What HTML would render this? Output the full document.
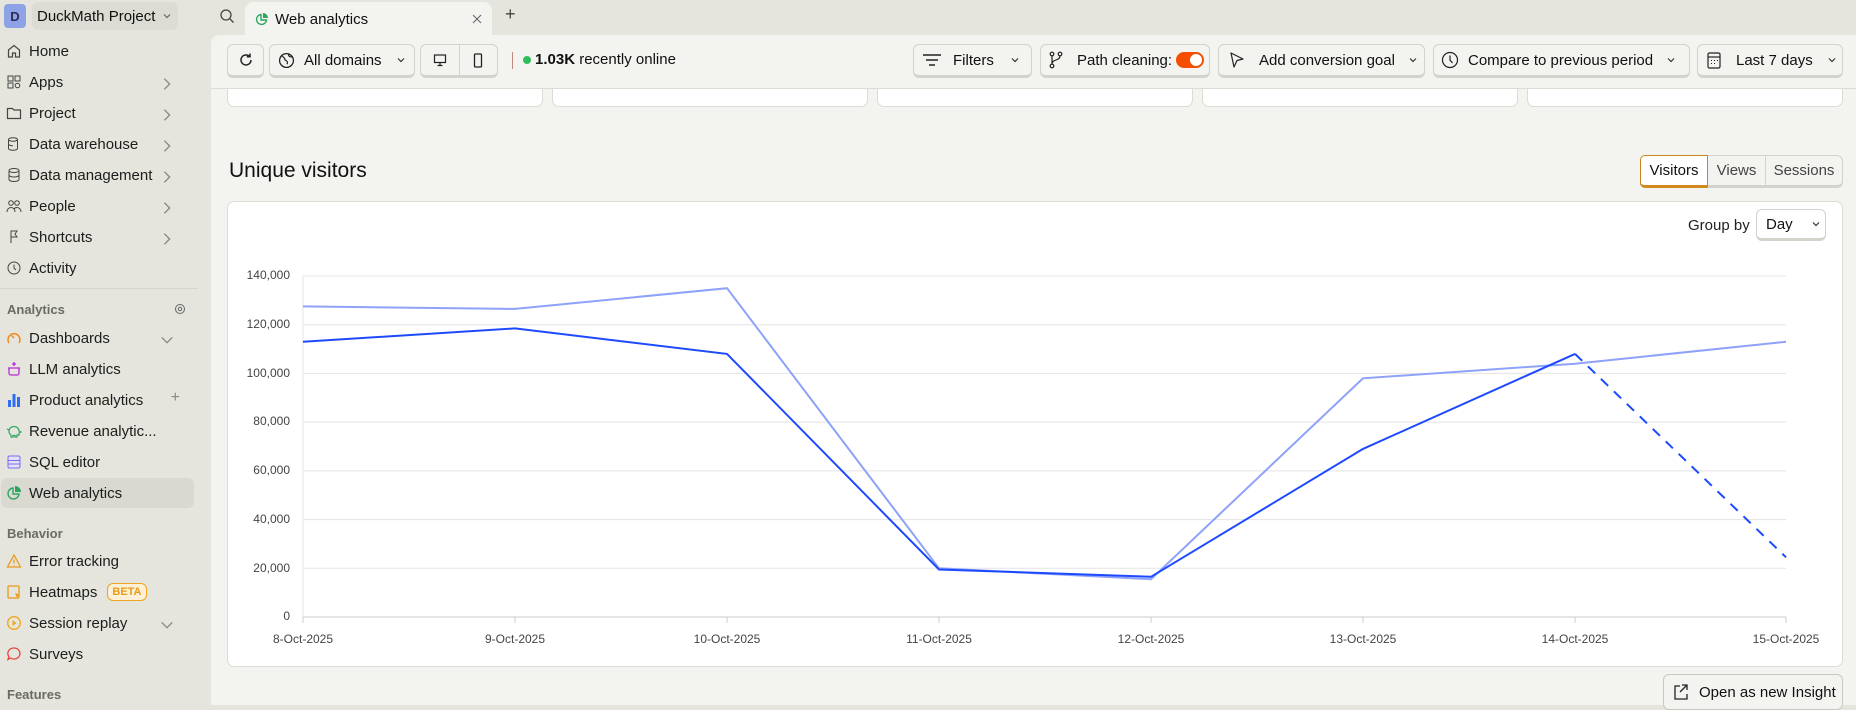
<!DOCTYPE html>
<html><head><meta charset="utf-8"><style>
*{box-sizing:border-box;margin:0;padding:0}
body{width:1856px;height:705px;overflow:hidden;background:#e5e5de;font-family:"Liberation Sans",sans-serif;color:#111;position:relative;font-size:15px}
.a{position:absolute}
.side .it{position:absolute;left:6px;height:30px;width:186px;display:flex;align-items:center;font-size:15px;color:#1d1d1d}
.side .it svg{width:16px;height:16px;margin-right:7px;flex:none}
.side .chev{position:absolute;right:10px;top:9px;width:12px;height:12px}
.hdr{position:absolute;left:7px;font-size:13px;font-weight:bold;color:#6b6b66}
.main{position:absolute;left:211px;top:35px;width:1645px;height:670px;background:#f3f3ef;border-top-left-radius:8px}
.btn{position:absolute;top:44px;height:34px;background:#f3f3ef;border:1px solid #d3d3cc;border-bottom:3px solid #d3d3cc;border-radius:6px;display:flex;align-items:center;font-size:15px;color:#111}
.btn svg{flex:none}
.card{position:absolute;top:80px;height:27px;background:#fff;border:1px solid #dcdcd5;border-top:none;border-radius:0 0 7px 7px}
.card span{position:absolute;left:140px;top:-3px;font-size:12px}
.yl{position:absolute;right:1566px;font-size:12px;color:#444;text-align:right}
.xl{position:absolute;top:632px;font-size:12px;color:#444;width:100px;text-align:center}
</style></head><body>
<!-- top bar -->
<div class="a" style="left:4px;top:4px;width:22px;height:24px;background:#8ea2e6;border-radius:4px;color:#2b2b5a;font-weight:bold;font-size:13px;display:flex;align-items:center;justify-content:center">D</div>
<div class="a" style="left:32px;top:2px;width:146px;height:28px;background:#dcdcd4;border-radius:6px;display:flex;align-items:center;padding-left:5px;font-size:15px">DuckMath Project<svg style="margin-left:7px" width="10" height="10" viewBox="0 0 10 10"><path d="M2 3.5l3 3 3-3" stroke="#666" fill="none" stroke-width="1.2"/></svg></div>
<svg class="a" style="left:219px;top:8px" width="16" height="16" viewBox="0 0 16 16"><circle cx="7" cy="7" r="5" stroke="#444" fill="none" stroke-width="1.3"/><path d="M11 11l3.5 3.5" stroke="#444" stroke-width="1.3"/></svg>
<div class="a" style="left:245px;top:2px;width:247px;height:34px;background:#f3f3ef;border-radius:8px 8px 0 0;display:flex;align-items:center;padding-left:10px;font-size:15px">
<svg width="14" height="14" viewBox="0 0 14 14" style="margin-right:6px"><path d="M6 2.5A5 5 0 1 0 11.5 8H6z" stroke="#2ea55e" fill="none" stroke-width="1.4"/><path d="M8 1v5h5A5 5 0 0 0 8 1z" fill="#2ea55e"/></svg>Web analytics
<svg class="a" style="left:227px;top:12px" width="10" height="10" viewBox="0 0 10 10"><path d="M1 1l8 8M9 1l-8 8" stroke="#666" stroke-width="1.1"/></svg></div>
<div class="a" style="left:505px;top:4px;font-size:18px;color:#444">+</div>

<!-- sidebar -->
<div class="side">
<div class="it" style="top:36px"><svg viewBox="0 0 16 16"><path d="M2.5 7L8 2.5 13.5 7v7h-4v-4h-3v4h-4z" stroke="#444" fill="none" stroke-width="1.2"/></svg>Home</div>
<div class="it" style="top:67px"><svg viewBox="0 0 16 16"><rect x="2" y="2" width="5" height="5" stroke="#444" fill="none"/><rect x="9" y="2" width="5" height="5" stroke="#444" fill="none"/><rect x="2" y="9" width="5" height="5" stroke="#444" fill="none"/><circle cx="11.5" cy="11.5" r="2.3" stroke="#444" fill="none"/></svg>Apps<svg class="chev" viewBox="0 0 12 12"><path d="M4 2l4 4-4 4" stroke="#888" fill="none"/></svg></div>
<div class="it" style="top:98px"><svg viewBox="0 0 16 16"><path d="M1.5 3.5h5l1.5 1.5h6.5v8.5h-13z" stroke="#444" fill="none" stroke-width="1.2"/></svg>Project<svg class="chev" viewBox="0 0 12 12"><path d="M4 2l4 4-4 4" stroke="#888" fill="none"/></svg></div>
<div class="it" style="top:129px"><svg viewBox="0 0 16 16"><ellipse cx="7" cy="3.5" rx="4.5" ry="1.8" stroke="#444" fill="none"/><path d="M2.5 3.5v9c0 1 2 1.8 4.5 1.8s4.5-.8 4.5-1.8v-9M2.5 8c0 1 2 1.8 4.5 1.8" stroke="#444" fill="none"/></svg>Data warehouse<svg class="chev" viewBox="0 0 12 12"><path d="M4 2l4 4-4 4" stroke="#888" fill="none"/></svg></div>
<div class="it" style="top:160px"><svg viewBox="0 0 16 16"><ellipse cx="8" cy="3.5" rx="5" ry="2" stroke="#444" fill="none"/><path d="M3 3.5v9c0 1 2.2 2 5 2s5-1 5-2v-9M3 8c0 1 2.2 2 5 2s5-1 5-2" stroke="#444" fill="none"/></svg>Data management<svg class="chev" viewBox="0 0 12 12"><path d="M4 2l4 4-4 4" stroke="#888" fill="none"/></svg></div>
<div class="it" style="top:191px"><svg viewBox="0 0 16 16"><circle cx="5" cy="5" r="2.3" stroke="#444" fill="none"/><circle cx="11" cy="5" r="2.3" stroke="#444" fill="none"/><path d="M1 14c0-3 2-4.5 4-4.5s4 1.5 4 4.5M8 11c.6-1 1.8-1.5 3-1.5 2 0 4 1.5 4 4.5" stroke="#444" fill="none"/></svg>People<svg class="chev" viewBox="0 0 12 12"><path d="M4 2l4 4-4 4" stroke="#888" fill="none"/></svg></div>
<div class="it" style="top:222px"><svg viewBox="0 0 16 16"><path d="M5 14V2h6l-2 3 2 3H5" stroke="#444" fill="none"/></svg>Shortcuts<svg class="chev" viewBox="0 0 12 12"><path d="M4 2l4 4-4 4" stroke="#888" fill="none"/></svg></div>
<div class="it" style="top:253px"><svg viewBox="0 0 16 16"><circle cx="8" cy="8" r="6" stroke="#444" fill="none"/><path d="M8 4.5V8l2 2" stroke="#444" fill="none"/></svg>Activity</div>
<div class="a" style="left:0;top:288px;width:198px;border-top:1px solid #d5d5cc"></div>
<div class="hdr" style="top:302px">Analytics</div>
<svg class="a" style="left:174px;top:303px" width="12" height="12" viewBox="0 0 12 12"><circle cx="6" cy="6" r="4.5" stroke="#666" fill="none"/><circle cx="6" cy="6" r="1.7" stroke="#666" fill="none"/></svg>
<div class="it" style="top:323px"><svg viewBox="0 0 16 16"><path d="M3 13A6 6 0 1 1 13 13" stroke="#f28a1e" fill="none" stroke-width="1.5"/><path d="M8 8L5.5 5.5" stroke="#f28a1e" stroke-width="1.5"/></svg>Dashboards<svg class="chev" viewBox="0 0 12 12"><path d="M2 4l4 4 4-4" stroke="#888" fill="none"/></svg></div>
<div class="it" style="top:354px"><svg viewBox="0 0 16 16"><path d="M3 7h10v5a2 2 0 0 1-2 2H5a2 2 0 0 1-2-2zM2 7h12" stroke="#b62ad9" fill="none" stroke-width="1.3"/><path d="M8 1v4M6 3h4" stroke="#b62ad9" stroke-width="1.3"/></svg>LLM analytics</div>
<div class="it" style="top:385px"><svg viewBox="0 0 16 16"><rect x="2" y="8" width="3" height="7" fill="#2f6df6"/><rect x="6.5" y="2" width="3" height="13" fill="#2f6df6"/><rect x="11" y="5" width="3" height="10" fill="#2f6df6"/></svg>Product analytics<span class="a" style="right:12px;top:4px;color:#888;font-size:16px">+</span></div>
<div class="it" style="top:416px"><svg viewBox="0 0 16 16"><path d="M3 8a5 4.5 0 0 1 10 0l2 1-2 1v2h-2v2H9v-1.5H7V14H5v-2c-1.5-1-2-2.5-2-4zM1 6l2 1" stroke="#2ea55e" fill="none" stroke-width="1.2"/></svg>Revenue analytic...</div>
<div class="it" style="top:447px"><svg viewBox="0 0 16 16"><rect x="2" y="2" width="12" height="12" rx="1.5" stroke="#7c6cf0" fill="#e3e0fb"/><path d="M2 6.5h12M2 10h12" stroke="#7c6cf0"/></svg>SQL editor</div>
<div class="a" style="left:1px;top:478px;width:193px;height:30px;background:#d9d9d1;border-radius:6px"></div>
<div class="it" style="top:478px"><svg viewBox="0 0 16 16"><path d="M7 3A5.5 5.5 0 1 0 13 9H7z" stroke="#2ea55e" fill="none" stroke-width="1.4"/><path d="M9 1v6h6A6 6 0 0 0 9 1z" fill="#2ea55e"/></svg>Web analytics</div>
<div class="hdr" style="top:526px">Behavior</div>
<div class="it" style="top:546px"><svg viewBox="0 0 16 16"><path d="M8 2l6.5 12h-13z M8 6.5v4M8 12v.8" stroke="#e99b18" fill="none" stroke-width="1.3"/></svg>Error tracking</div>
<div class="it" style="top:577px"><svg viewBox="0 0 16 16"><rect x="2" y="2" width="11" height="12" rx="1" stroke="#e99b18" fill="none" stroke-width="1.3"/><path d="M9 9l5 2-2 1-1 2z" fill="#e99b18"/></svg>Heatmaps<span style="margin-left:10px;border:1.5px solid #f0a31f;color:#e99b18;border-radius:6px;font-size:11px;padding:2px 4px;font-weight:bold;background:#fdf0d8">BETA</span></div>
<div class="it" style="top:608px"><svg viewBox="0 0 16 16"><circle cx="8" cy="8" r="6.3" stroke="#f2a71c" fill="none" stroke-width="1.4"/><path d="M6.5 5l4 3-4 3z" fill="#f2a71c"/></svg>Session replay<svg class="chev" viewBox="0 0 12 12"><path d="M2 4l4 4 4-4" stroke="#888" fill="none"/></svg></div>
<div class="it" style="top:639px"><svg viewBox="0 0 16 16"><path d="M8 2a6 5.5 0 1 1-3.5 10L2 13.5l.8-3A6 5.5 0 0 1 8 2z" stroke="#e6443d" fill="none" stroke-width="1.3"/></svg>Surveys</div>
<div class="hdr" style="top:687px">Features</div>
</div>

<!-- main -->
<div class="main"></div>
<div class="card" style="left:227px;width:316px"><span style="color:#e6443d">- 16%</span></div>
<div class="card" style="left:552px;width:316px"><span style="color:#e6443d">- 22%</span></div>
<div class="card" style="left:877px;width:316px"><span style="color:#e6443d">- 25%</span></div>
<div class="card" style="left:1202px;width:316px"><span style="color:#666">0%</span></div>
<div class="card" style="left:1527px;width:316px"><span style="color:#58a52a">+ 1%</span></div>
<!-- toolbar bg -->
<div class="a" style="left:211px;top:35px;width:1645px;height:54px;background:#f3f3ef;border-bottom:1px solid #dcdcd5;border-top-left-radius:8px"></div>
<div class="btn" style="left:227px;width:37px;justify-content:center"><svg width="16" height="16" viewBox="0 0 16 16"><path d="M13 8a5 5 0 1 1-1.5-3.6M12 1.5v3.2H8.8" stroke="#222" fill="none" stroke-width="1.5"/></svg></div>
<div class="btn" style="left:269px;width:146px;padding-left:8px"><svg width="17" height="17" viewBox="0 0 16 16"><circle cx="8" cy="8" r="6.5" stroke="#222" fill="none" stroke-width="1.2"/><path d="M4 3.5c1 2 3 2 2.5 4 2 .5 3 2 2 4M10 2.2c-.5 1.5 1 2.5 3 2.5" stroke="#222" fill="none" stroke-width="1.1"/></svg><span style="margin-left:9px">All domains</span><svg style="margin-left:14px" width="10" height="10" viewBox="0 0 10 10"><path d="M2 3.5l3 3 3-3" stroke="#333" fill="none" stroke-width="1.2"/></svg></div>
<div class="btn" style="left:420px;width:78px"><div style="width:39px;height:100%;display:flex;align-items:center;justify-content:center;border-right:1px solid #d3d3cc"><svg width="14" height="14" viewBox="0 0 14 14"><rect x="1.5" y="2" width="11" height="7.5" stroke="#222" fill="none" stroke-width="1.2"/><path d="M7 9.5v3M4.5 12.5h5" stroke="#222" stroke-width="1.2"/></svg></div><div style="width:38px;display:flex;justify-content:center"><svg width="12" height="15" viewBox="0 0 12 15"><rect x="2.5" y="1" width="7" height="13" rx="1" stroke="#222" fill="none" stroke-width="1.3"/></svg></div></div>
<div class="a" style="left:512px;top:52px;height:17px;border-left:1.5px solid #c08a80"></div>
<div class="a" style="left:523px;top:56px;width:8px;height:8px;border-radius:50%;background:#2ebd5e"></div>
<div class="a" style="left:535px;top:51px;font-size:15px"><b>1.03K</b> recently online</div>

<div class="btn" style="left:913px;width:119px;padding-left:8px"><svg width="20" height="16" viewBox="0 0 20 16"><path d="M1 3h18M4 8h12M7 13h6" stroke="#222" stroke-width="1.6"/></svg><span style="margin-left:11px">Filters</span><svg style="margin-left:16px" width="10" height="10" viewBox="0 0 10 10"><path d="M2 3.5l3 3 3-3" stroke="#333" fill="none" stroke-width="1.2"/></svg></div>
<div class="btn" style="left:1040px;width:170px;padding-left:8px"><svg width="14" height="18" viewBox="0 0 14 18"><circle cx="3" cy="3" r="1.8" stroke="#222" fill="none" stroke-width="1.2"/><circle cx="11" cy="3" r="1.8" stroke="#222" fill="none" stroke-width="1.2"/><circle cx="3" cy="15" r="1.8" stroke="#222" fill="none" stroke-width="1.2"/><path d="M3 5v8M11 5c0 5-8 3-8 8" stroke="#222" fill="none" stroke-width="1.2"/></svg><span style="margin-left:14px">Path cleaning:</span><span style="margin-left:4px;width:28px;height:16px;border-radius:8px;background:#f54e00;position:relative;display:inline-block"><span style="position:absolute;right:2px;top:2px;width:12px;height:12px;border-radius:50%;background:#fff"></span></span></div>
<div class="btn" style="left:1218px;width:207px;padding-left:10px"><svg width="16" height="18" viewBox="0 0 16 18"><path d="M2 2l12 6-6 1.5L5 16z" stroke="#222" fill="none" stroke-width="1.2" stroke-linejoin="round"/></svg><span style="margin-left:14px">Add conversion goal</span><svg style="margin-left:13px" width="10" height="10" viewBox="0 0 10 10"><path d="M2 3.5l3 3 3-3" stroke="#333" fill="none" stroke-width="1.2"/></svg></div>
<div class="btn" style="left:1433px;width:257px;padding-left:7px"><svg width="18" height="18" viewBox="0 0 18 18"><circle cx="9" cy="9" r="7.5" stroke="#222" fill="none" stroke-width="1.2"/><path d="M9 4.5V9l2.5 3" stroke="#222" fill="none" stroke-width="1.2"/></svg><span style="margin-left:9px">Compare to previous period</span><svg style="margin-left:13px" width="10" height="10" viewBox="0 0 10 10"><path d="M2 3.5l3 3 3-3" stroke="#333" fill="none" stroke-width="1.2"/></svg></div>
<div class="btn" style="left:1697px;width:146px;padding-left:9px"><svg width="14" height="17" viewBox="0 0 14 17"><rect x="1" y="1" width="12" height="15" rx="1.5" stroke="#222" fill="none" stroke-width="1.2"/><path d="M1 5h12" stroke="#222" stroke-width="1.2"/><path d="M4 8.5h1M7 8.5h1M10 8.5h1M4 11.5h1M7 11.5h1" stroke="#222"/></svg><span style="margin-left:15px">Last 7 days</span><svg style="margin-left:14px" width="10" height="10" viewBox="0 0 10 10"><path d="M2 3.5l3 3 3-3" stroke="#333" fill="none" stroke-width="1.2"/></svg></div>

<div class="a" style="left:229px;top:159px;font-size:21px;color:#111">Unique visitors</div>
<div class="a" style="left:1640px;top:155px;width:203px;height:33px;border:1px solid #d3d3cc;border-bottom:3px solid #d3d3cc;border-radius:6px;display:flex;font-size:15px;color:#444;background:#f3f3ef">
<div style="width:68px;background:#fff;border:1px solid #c6861a;border-bottom:3px solid #d2881b;border-radius:5px 0 0 5px;margin:-1px 0 -3px -1px;display:flex;align-items:center;justify-content:center;color:#111">Visitors</div>
<div style="width:58px;display:flex;align-items:center;justify-content:center;border-right:1px solid #d3d3cc">Views</div>
<div style="flex:1;display:flex;align-items:center;justify-content:center">Sessions</div></div>

<div class="a" style="left:227px;top:201px;width:1616px;height:466px;background:#fff;border:1px solid #dcdcd5;border-radius:7px"></div>
<div class="a" style="left:1688px;top:217px;font-size:15px;color:#222">Group by</div>
<div class="a" style="left:1756px;top:209px;width:70px;height:32px;border:1px solid #d3d3cc;border-bottom:3px solid #d3d3cc;border-radius:6px;display:flex;align-items:center;padding-left:9px;font-size:15px;background:#fff">Day<svg style="margin-left:18px" width="10" height="10" viewBox="0 0 10 10"><path d="M2 3.5l3 3 3-3" stroke="#333" fill="none" stroke-width="1.2"/></svg></div>

<svg class="a" style="left:0;top:0" width="1856" height="705">
<g stroke="#e4e4e4" stroke-width="1">
<path d="M303 276H1786M303 324.7H1786M303 373.4H1786M303 422.1H1786M303 470.9H1786M303 519.6H1786M303 568.3H1786"/>
</g>
<path d="M303 617H1786" stroke="#ccc"/>
<path d="M303 276V622" stroke="#e4e4e4"/>
<g stroke="#ccc"><path d="M303 617v6M515 617v6M727 617v6M939 617v6M1151 617v6M1363 617v6M1575 617v6M1786 617v6"/></g>
<polyline fill="none" stroke="#8ea2fa" stroke-width="2" points="303,306.4 515,308.9 727,288.2 939,568.3 1151,579.2 1363,378.3 1575,363.7 1786,341.8"/>
<polyline fill="none" stroke="#1d4aff" stroke-width="2" points="303,341.8 515,328.4 727,353.9 939,569.5 1151,576.8 1363,448.9 1575,353.9"/>
<path d="M1575 353.9L1786 557.3" stroke="#1d4aff" stroke-width="2" stroke-dasharray="10 8" fill="none"/>
</svg>
<div class="yl" style="top:268px">140,000</div>
<div class="yl" style="top:317px">120,000</div>
<div class="yl" style="top:366px">100,000</div>
<div class="yl" style="top:414px">80,000</div>
<div class="yl" style="top:463px">60,000</div>
<div class="yl" style="top:512px">40,000</div>
<div class="yl" style="top:561px">20,000</div>
<div class="yl" style="top:609px">0</div>
<div class="xl" style="left:253px">8-Oct-2025</div>
<div class="xl" style="left:465px">9-Oct-2025</div>
<div class="xl" style="left:677px">10-Oct-2025</div>
<div class="xl" style="left:889px">11-Oct-2025</div>
<div class="xl" style="left:1101px">12-Oct-2025</div>
<div class="xl" style="left:1313px">13-Oct-2025</div>
<div class="xl" style="left:1525px">14-Oct-2025</div>
<div class="xl" style="left:1736px">15-Oct-2025</div>

<div class="a" style="left:1663px;top:674px;width:180px;height:36px;border:1px solid #c8c8c0;border-radius:6px;background:#f3f3ef;display:flex;align-items:center;padding-left:9px;font-size:15px"><svg width="16" height="18" viewBox="0 0 16 18"><path d="M7 3H2v13h12v-5" stroke="#222" fill="none" stroke-width="1.3"/><path d="M9 2h5v5M14 2L7 9" stroke="#222" fill="none" stroke-width="1.3"/></svg><span style="margin-left:10px">Open as new Insight</span></div>
</body></html>
